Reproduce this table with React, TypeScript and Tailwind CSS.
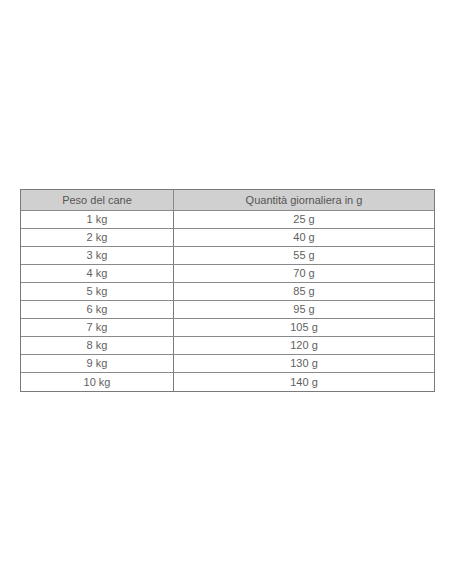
const rows: [string, string][] = [
  ['1 kg', '25 g'],
  ['2 kg', '40 g'],
  ['3 kg', '55 g'],
  ['4 kg', '70 g'],
  ['5 kg', '85 g'],
  ['6 kg', '95 g'],
  ['7 kg', '105 g'],
  ['8 kg', '120 g'],
  ['9 kg', '130 g'],
  ['10 kg', '140 g'],
];

export default function App() {
  return (
    <div className="w-[452px] h-[584px] bg-white pt-[189px] pl-[20px] font-['Liberation_Sans',Arial,sans-serif] text-[11px] text-[#5f5f5f]">
      <div className="w-[415px] border border-[#7a7a7a]">
        <div className="flex h-[21px] bg-[#d0d0d0] border-b border-[#8a8a8a] text-[#555]">
          <div className="w-[153px] flex items-center justify-center border-r border-[#8a8a8a]">Peso del cane</div>
          <div className="flex-1 flex items-center justify-center">Quantità giornaliera in g</div>
        </div>
        {rows.map(([peso, qta], i) => (
          <div
            key={peso}
            className={`flex h-[18px] ${i < rows.length - 1 ? 'border-b border-[#8a8a8a]' : 'h-[17px]'}`}
          >
            <div className="w-[153px] flex items-center justify-center border-r border-[#7a7a7a]">{peso}</div>
            <div className="flex-1 flex items-center justify-center">{qta}</div>
          </div>
        ))}
      </div>
    </div>
  );
}
